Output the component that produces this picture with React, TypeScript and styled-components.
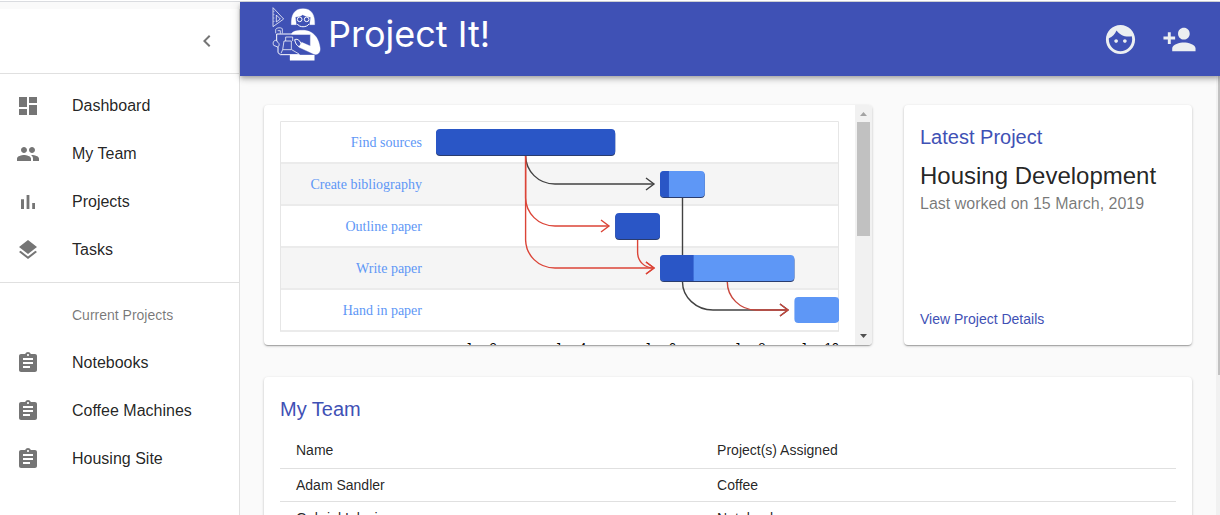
import React from "react";
import styled, { createGlobalStyle } from "styled-components";

const GlobalStyle = createGlobalStyle`
  *, *::before, *::after { box-sizing: border-box; }
  body {
    margin: 0;
    background: #fafafa;
    color: rgba(0, 0, 0, 0.87);
    font-family: "Liberation Sans", Arial, sans-serif;
  }
`;

const Page = styled.div`
  display: flex;
  height: 100vh;
  overflow: hidden;
  border-top: 1px solid #fff;
`;

const Shell = styled.div`
  display: flex;
  flex: 1;
  min-width: 0;
  border-top: 1px solid #dadce0;
`;

const Sidebar = styled.nav`
  flex: none;
  width: 240px;
  margin-top: 7px;
  background: #fff;
  border-right: 1px solid #e0e0e0;
`;

const SidebarHead = styled.div`
  display: flex;
  align-items: center;
  justify-content: flex-end;
  height: 64px;
  padding: 0 8px;
`;

const IconButton = styled.button`
  display: flex;
  padding: 12px;
  border: 0;
  background: none;
  color: inherit;
  cursor: pointer;
`;

const CollapseButton = styled(IconButton)`
  color: rgba(0, 0, 0, 0.54);
`;

const NavList = styled.ul`
  margin: 0;
  padding: 8px 0;
  border-top: 1px solid #e0e0e0;
  list-style: none;
`;

const NavHeading = styled.li`
  padding-left: 72px;
  color: rgba(0, 0, 0, 0.54);
  font-size: 14px;
  line-height: 48px;
`;

const NavLink = styled.a`
  display: flex;
  align-items: center;
  gap: 32px;
  height: 48px;
  padding: 0 16px;
  color: rgba(0, 0, 0, 0.87);
  font-size: 16px;
  line-height: 24px;
  text-decoration: none;

  svg { color: rgba(0, 0, 0, 0.54); }
`;

const Column = styled.div`
  display: flex;
  flex: 1;
  flex-direction: column;
  min-width: 0;
`;

const AppBar = styled.header`
  position: relative;
  z-index: 1;
  display: flex;
  flex: none;
  align-items: center;
  justify-content: space-between;
  height: 74px;
  padding: 0 11px 0 32px;
  background: #3f51b5;
  color: #eceff1;
  box-shadow: 0 2px 4px -1px rgba(0, 0, 0, 0.2), 0 4px 5px rgba(0, 0, 0, 0.14),
    0 1px 10px rgba(0, 0, 0, 0.12);
`;

const Brand = styled.a`
  display: flex;
  gap: 7px;
  padding-bottom: 10px;
  color: #fff;
  font-family: Inter, "Liberation Sans", sans-serif;
  font-size: 36px;
  line-height: 56px;
  text-decoration: none;
`;

const Actions = styled.div`
  display: flex;
`;

const Body = styled.div`
  display: flex;
  flex: 1;
  min-height: 0;
`;

const Content = styled.main`
  display: grid;
  flex: 1;
  grid-template-columns: repeat(3, minmax(0, 1fr));
  gap: 32px;
  align-content: start;
  min-width: 0;
  padding: 29px 24px;
`;

const PageScroll = styled.div`
  flex: none;
  width: 4px;
  padding-left: 2px;
  background: #f1f1f1;
`;

const PageThumb = styled.div`
  height: 68%;
  background: #c1c1c1;
`;

const Card = styled.section<{ $span?: number }>`
  display: flex;
  grid-column: span ${(p) => p.$span ?? 1};
  flex-direction: column;
  padding: 16px;
  border-radius: 4px;
  background: #fff;
  box-shadow: 0 1px 3px rgba(0, 0, 0, 0.2), 0 1px 1px rgba(0, 0, 0, 0.14),
    0 2px 1px -1px rgba(0, 0, 0, 0.12);
`;

const ShortCard = styled(Card)`
  height: 240px;
`;

const ChartCard = styled(ShortCard)`
  flex-direction: row;
  padding: 0;
  overflow: hidden;
`;

const ChartPane = styled.div`
  flex: 1;
  min-width: 0;
  padding: 16px;

  svg { display: block; width: 100%; }
`;

const ScrollTrack = styled.div`
  display: flex;
  flex: none;
  flex-direction: column;
  width: 17px;
  background: #f1f1f1;
`;

const ScrollArrow = styled.svg`
  display: block;
  flex: none;
  width: 17px;
  height: 17px;
`;

const ScrollRail = styled.div`
  flex: 1;
  padding: 0 2px;
`;

const ScrollThumb = styled.div`
  height: 114px;
  background: #c1c1c1;
`;

const Title = styled.h2`
  margin: 0 0 7px;
  color: #3f51b5;
  font-size: 20px;
  font-weight: 400;
  line-height: 32px;
`;

const ProjectName = styled.p`
  margin: 0;
  font-size: 24px;
  line-height: 32px;
`;

const Note = styled.p`
  flex: 1;
  margin: 0;
  color: rgba(0, 0, 0, 0.54);
  font-size: 16px;
  line-height: 24px;
`;

const DetailLink = styled.a`
  color: #3f51b5;
  font-size: 14px;
  line-height: 20px;
  text-decoration: none;
`;

const Table = styled.table`
  width: 100%;
  border-collapse: separate;
  border-spacing: 0;
  font-size: 14px;
  line-height: 20px;
`;

const HeadCell = styled.th`
  padding: 6px 16px;
  border-bottom: 1px solid #e0e0e0;
  font-weight: 400;
  line-height: 24px;
  text-align: left;

  &:first-child { width: 47%; }
`;

const Cell = styled.td`
  padding: 6px 16px;
  border-bottom: 1px solid #e0e0e0;
`;

const ICONS = {
  dashboard: "M3 13h8V3H3v10zm0 8h8v-6H3v6zm10 0h8V11h-8v10zm0-18v6h8V3h-8z",
  people:
    "M16 11c1.66 0 2.99-1.34 2.99-3S17.66 5 16 5c-1.66 0-3 1.34-3 3s1.34 3 3 3zm-8 0c1.66 0 2.99-1.34 2.99-3S9.66 5 8 5C6.34 5 5 6.34 5 8s1.34 3 3 3zm0 2c-2.33 0-7 1.17-7 3.5V19h14v-2.5c0-2.33-4.67-3.5-7-3.5zm8 0c-.29 0-.62.02-.97.05 1.16.84 1.97 1.97 1.97 3.45V19h6v-2.5c0-2.33-4.67-3.5-7-3.5z",
  chart: "M5 9.2h3V19H5zM10.6 5h2.8v14h-2.8zm5.6 8H19v6h-2.8z",
  layers:
    "M11.99 18.54l-7.37-5.73L3 14.07l9 7 9-7-1.63-1.27-7.38 5.74zM12 16l7.36-5.73L21 9l-9-7-9 7 1.63 1.27L12 16z",
  assignment:
    "M19 3h-4.18C14.4 1.84 13.3 1 12 1c-1.3 0-2.4.84-2.82 2H5c-1.1 0-2 .9-2 2v14c0 1.1.9 2 2 2h14c1.1 0 2-.9 2-2V5c0-1.1-.9-2-2-2zm-7 0c.55 0 1 .45 1 1s-.45 1-1 1-1-.45-1-1 .45-1 1-1zm2 14H7v-2h7v2zm3-4H7v-2h10v2zm0-4H7V7h10v2z",
  chevronLeft: "M15.41 7.41L14 6l-6 6 6 6 1.41-1.41L10.83 12z",
  face: "M9 11.75c-.69 0-1.25.56-1.25 1.25s.56 1.25 1.25 1.25 1.25-.56 1.25-1.25-.56-1.25-1.25-1.25zm6 0c-.69 0-1.25.56-1.25 1.25s.56 1.25 1.25 1.25 1.25-.56 1.25-1.25-.56-1.25-1.25-1.25zM12 2C6.48 2 2 6.48 2 12s4.48 10 10 10 10-4.48 10-10S17.52 2 12 2zm0 18c-4.41 0-8-3.59-8-8 0-.29.02-.58.05-.86 2.36-1.05 4.23-2.98 5.21-5.37C11.07 8.33 14.05 10 17.42 10c.78 0 1.53-.09 2.25-.26.21.71.33 1.47.33 2.26 0 4.41-3.59 8-8 8z",
  personAdd:
    "M15 12c2.21 0 4-1.79 4-4s-1.79-4-4-4-4 1.79-4 4 1.79 4 4 4zm-9-2V7H4v3H1v2h3v3h2v-3h3v-2H6zm9 4c-2.67 0-8 1.34-8 4v2h16v-2c0-2.66-5.33-4-8-4z",
};

type IconName = keyof typeof ICONS;

const Icon = ({ name, size = 24 }: { name: IconName; size?: number }) => (
  <svg width={size} height={size} viewBox="0 0 24 24" fill="currentColor" aria-hidden="true">
    <path d={ICONS[name]} />
  </svg>
);

const Logo = () => (
  <svg width="49" height="56" viewBox="125 18 147 168" fill="none" stroke="#fff" strokeWidth="3" strokeLinejoin="round" aria-hidden="true">
    {/* set square */}
    <path d="M128 23V80L160 57Z" strokeOpacity=".75" />
    <path d="M138 45V66L150 57Z" strokeOpacity=".75" />
    <path d="M128 34h5M128 44h5M128 54h5M128 64h5" strokeOpacity=".6" strokeWidth="2" />
    {/* hair and face */}
    <path d="M183 74C182 44 192 26 218 26S254 44 253 74H238L241 52C230 50 222 47 217 44C212 48 205 50 195 51L198 74Z" fill="#fff" strokeWidth="1" />
    <circle cx="208" cy="58" r="7" />
    <circle cx="229" cy="58" r="7" />
    <path d="M201 72C207 83 229 83 236 72" />
    {/* shoulders and arm */}
    <path d="M184 100C192 91 205 91 218 91S262 96 269 142C272 160 260 166 250 162L206 142L214 127L240 138V103H184Z" fill="#fff" strokeWidth="1" />
    <rect x="179" y="165" width="73" height="16" fill="#fff" strokeWidth="1" />
    {/* drawing board */}
    <path d="M139 102H240M139 102V122M143 140V158L150 164H208" />
    <path d="M136 100V88C140 82 152 82 156 86V100M142 92H150V101" strokeOpacity=".7" />
    {/* hands and paper */}
    <path d="M139 121C128 120 127 130 130 136L142 141C149 137 147 128 141 126Z" strokeOpacity=".8" />
    <path d="M161 123H183V149H157ZM166 123V111H187V123M157 149L152 160M184 149L206 162" strokeOpacity=".75" />
    <path d="M193 119C203 115 209 122 213 134L206 140C199 136 195 130 193 119Z" />
  </svg>
);

interface Task {
  name: string;
  start: number;
  days: number;
  done: number;
}

const TASKS: Task[] = [
  { name: "Find sources", start: 0, days: 4, done: 1 },
  { name: "Create bibliography", start: 5, days: 1, done: 0.2 },
  { name: "Outline paper", start: 4, days: 1, done: 1 },
  { name: "Write paper", start: 5, days: 3, done: 0.25 },
  { name: "Hand in paper", start: 8, days: 1, done: 0 },
];

const CHART_LEFT = 156;
const DAY = 44.8;
const ROW = 42;
const TICKS = [1, 3, 5, 7];

const Arrow = ({ d, x, y, color }: { d: string; x: number; y: number; color: string }) => (
  <g fill="none" stroke={color} strokeWidth="1.4">
    <path d={d} />
    <path d={`M${x - 8} ${y - 6}L${x} ${y}L${x - 8} ${y + 6}`} />
  </g>
);

const GanttChart = () => (
  <svg viewBox="0 0 559 240" role="img" aria-label="Project schedule">
    {TASKS.map((task, i) => (
      <rect key={task.name} x="0" y={i * ROW} width="559" height={ROW} fill={i % 2 ? "#f5f5f5" : "#fff"} />
    ))}
    {TASKS.map((task, i) => (
      <path key={task.name} d={`M0 ${(i + 1) * ROW}H559`} stroke="#ebebeb" strokeWidth="2" />
    ))}
    <path d="M.5 210V.5H558.5V210" fill="none" stroke="#e6e6e6" />
    <Arrow color="#424242" x={374} y={63} d="M245.6 35C246 50 258 63 275 63H374" />
    <Arrow color="#424242" x={508} y={189} d="M402.5 77V161C402.5 176 416 189 433 189H508" />
    <Arrow color="#db4437" x={329} y={105} d="M245.6 35V77C246 92 258 105 275 105H329" />
    <Arrow color="#db4437" x={374} y={147} d="M245.6 35V119C246 134 258 147 275 147H374" />
    <Arrow color="#db4437" x={374} y={147} d="M357.6 119V131C357.6 140 364 147 374 147" />
    <Arrow color="#c8463c" x={508} y={189} d="M447.3 161C447.3 176 460 189 476 189H508" />
    {TASKS.map((task, i) => {
      const x = CHART_LEFT + task.start * DAY;
      const y = i * ROW + 8;
      const width = task.days * DAY;
      const doneWidth = width * task.done;
      const complete = task.done === 1;
      return (
        <g key={task.name}>
          {task.done > 0 && <rect x={x} y={y + 1} width={width} height="26" rx="4" fill="#2a3c6e" />}
          <rect x={x} y={y} width={width} height="26" rx="4" fill={complete ? "#2a56c6" : "#5e97f6"} />
          {task.done > 0 && !complete && (
            <path
              d={`M${x + doneWidth} ${y}H${x + 4}a4 4 0 0 0 -4 4v18a4 4 0 0 0 4 4H${x + doneWidth}Z`}
              fill="#2a56c6"
            />
          )}
          <text x="142" y={i * ROW + 26} textAnchor="end" fill="#5e97f6" fontFamily='"Liberation Serif", "Times New Roman", serif' fontSize="14">
            {task.name}
          </text>
        </g>
      );
    })}
    <g fontFamily='"Liberation Sans", Arial, sans-serif' fontSize="13" fill="#000">
      {TICKS.map((day) => (
        <text key={day} x={CHART_LEFT + day * DAY} y="231" textAnchor="middle">
          {`Jan ${day + 1}`}
        </text>
      ))}
      <text x="559" y="231" textAnchor="end">Jan 10</text>
    </g>
  </svg>
);

const MAIN_LINKS: [IconName, string][] = [
  ["dashboard", "Dashboard"],
  ["people", "My Team"],
  ["chart", "Projects"],
  ["layers", "Tasks"],
];

const PROJECT_LINKS = ["Notebooks", "Coffee Machines", "Housing Site"];

const TEAM = [
  ["Adam Sandler", "Coffee"],
  ["Gabriel Iglesias", "Notebooks"],
];

const NavItem = ({ icon, label }: { icon: IconName; label: string }) => (
  <li>
    <NavLink href="#">
      <Icon name={icon} />
      {label}
    </NavLink>
  </li>
);

export default function App() {
  return (
    <Page>
      <GlobalStyle />
      <Shell>
        <Sidebar>
          <SidebarHead>
            <CollapseButton aria-label="Collapse menu">
              <Icon name="chevronLeft" />
            </CollapseButton>
          </SidebarHead>
          <NavList>
            {MAIN_LINKS.map(([icon, label]) => (
              <NavItem key={label} icon={icon} label={label} />
            ))}
          </NavList>
          <NavList>
            <NavHeading>Current Projects</NavHeading>
            {PROJECT_LINKS.map((label) => (
              <NavItem key={label} icon="assignment" label={label} />
            ))}
          </NavList>
        </Sidebar>
        <Column>
          <AppBar>
            <Brand href="#">
              <Logo />
              Project It!
            </Brand>
            <Actions>
              <IconButton aria-label="Account">
                <Icon name="face" size={35} />
              </IconButton>
              <IconButton aria-label="Add person">
                <Icon name="personAdd" size={35} />
              </IconButton>
            </Actions>
          </AppBar>
          <Body>
            <Content>
              <ChartCard $span={2}>
                <ChartPane>
                  <GanttChart />
                </ChartPane>
                <ScrollTrack aria-hidden="true">
                  <ScrollArrow viewBox="0 0 17 17">
                    <path d="M5 11L8.5 7L12 11Z" fill="#a3a3a3" />
                  </ScrollArrow>
                  <ScrollRail>
                    <ScrollThumb />
                  </ScrollRail>
                  <ScrollArrow viewBox="0 0 17 17">
                    <path d="M5 6L8.5 10L12 6Z" fill="#505050" />
                  </ScrollArrow>
                </ScrollTrack>
              </ChartCard>
              <ShortCard>
                <Title>Latest Project</Title>
                <ProjectName>Housing Development</ProjectName>
                <Note>Last worked on 15 March, 2019</Note>
                <DetailLink href="#">View Project Details</DetailLink>
              </ShortCard>
              <Card $span={3}>
                <Title>My Team</Title>
                <Table>
                  <thead>
                    <tr>
                      <HeadCell scope="col">Name</HeadCell>
                      <HeadCell scope="col">Project(s) Assigned</HeadCell>
                    </tr>
                  </thead>
                  <tbody>
                    {TEAM.map(([name, project]) => (
                      <tr key={name}>
                        <Cell>{name}</Cell>
                        <Cell>{project}</Cell>
                      </tr>
                    ))}
                  </tbody>
                </Table>
              </Card>
            </Content>
            <PageScroll aria-hidden="true">
              <PageThumb />
            </PageScroll>
          </Body>
        </Column>
      </Shell>
    </Page>
  );
}
